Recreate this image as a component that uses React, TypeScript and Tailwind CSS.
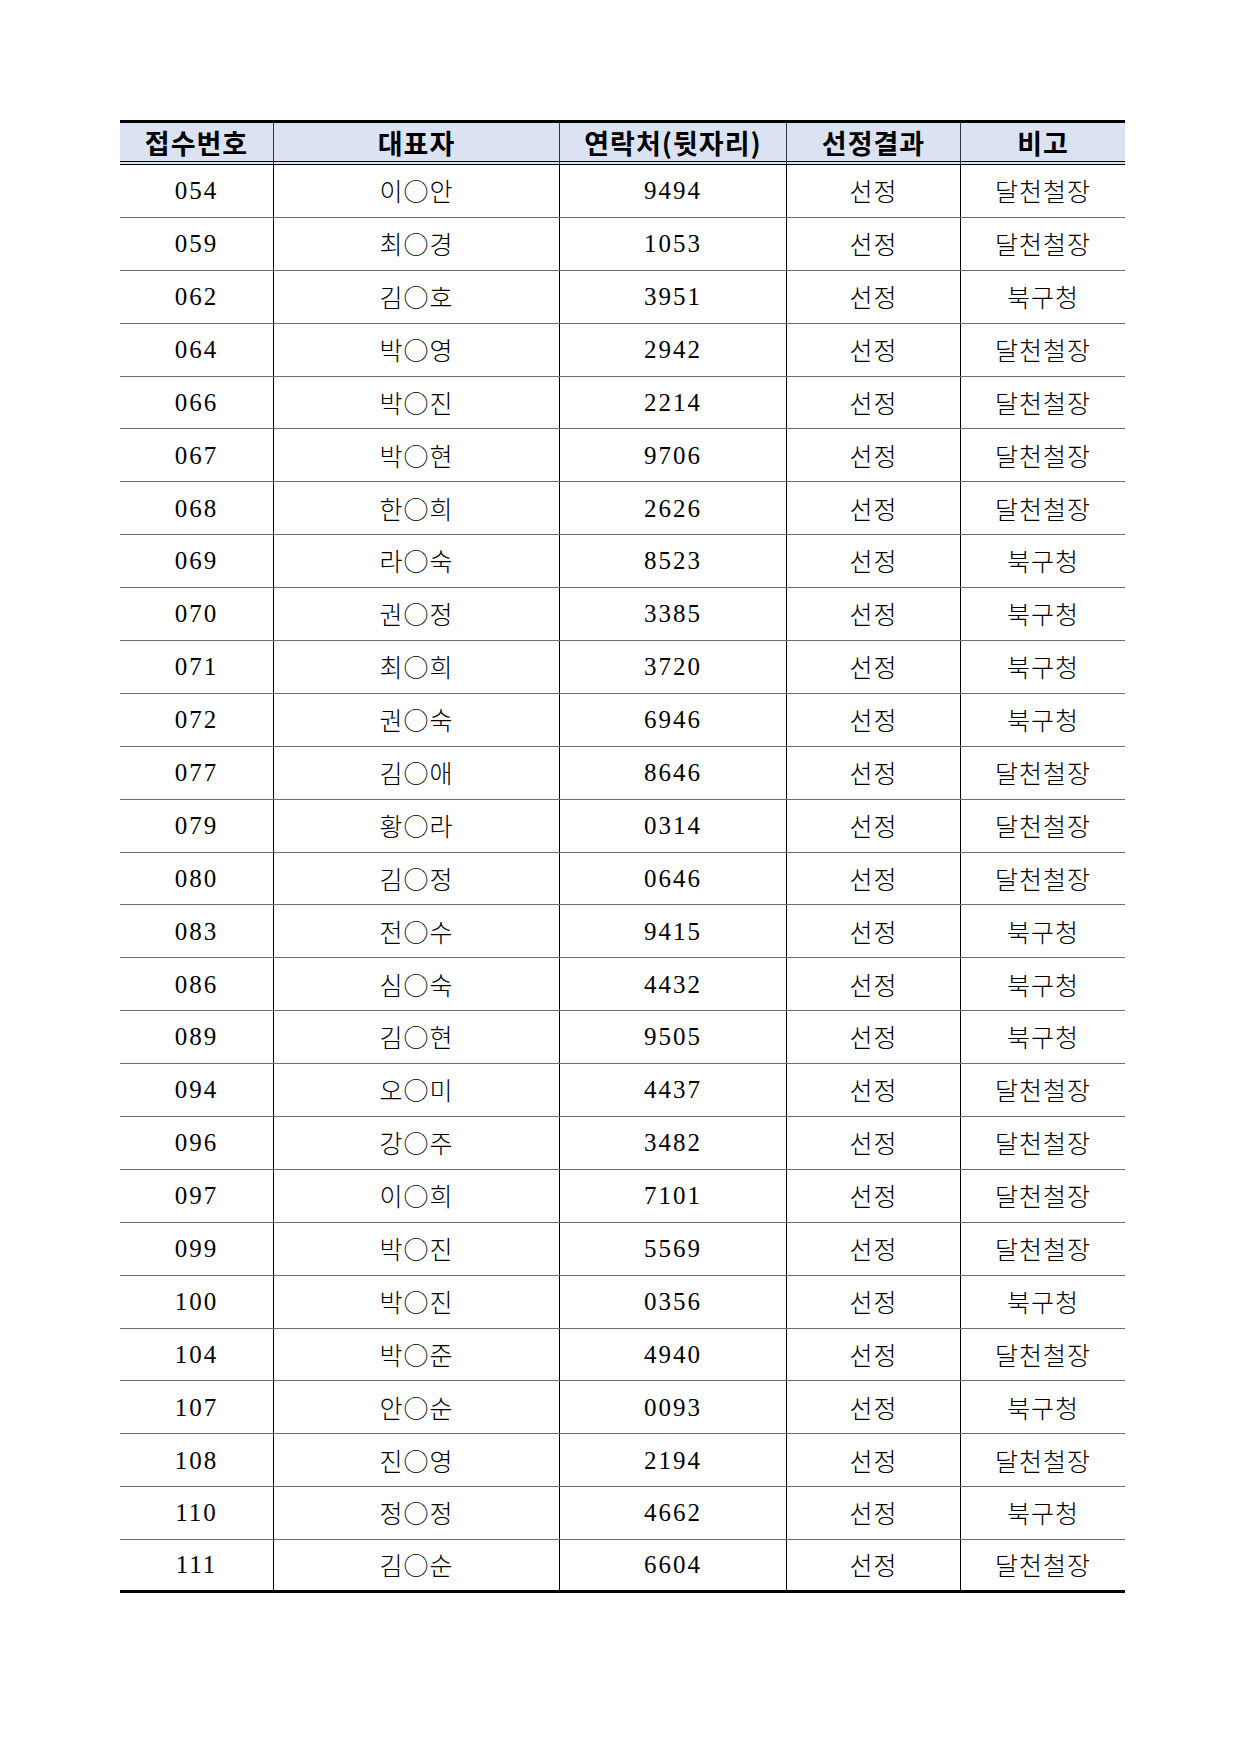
const rows: [string, string, string, string][] = [
  ["054", "이○안", "9494", "달천철장"],
  ["059", "최○경", "1053", "달천철장"],
  ["062", "김○호", "3951", "북구청"],
  ["064", "박○영", "2942", "달천철장"],
  ["066", "박○진", "2214", "달천철장"],
  ["067", "박○현", "9706", "달천철장"],
  ["068", "한○희", "2626", "달천철장"],
  ["069", "라○숙", "8523", "북구청"],
  ["070", "권○정", "3385", "북구청"],
  ["071", "최○희", "3720", "북구청"],
  ["072", "권○숙", "6946", "북구청"],
  ["077", "김○애", "8646", "달천철장"],
  ["079", "황○라", "0314", "달천철장"],
  ["080", "김○정", "0646", "달천철장"],
  ["083", "전○수", "9415", "북구청"],
  ["086", "심○숙", "4432", "북구청"],
  ["089", "김○현", "9505", "북구청"],
  ["094", "오○미", "4437", "달천철장"],
  ["096", "강○주", "3482", "달천철장"],
  ["097", "이○희", "7101", "달천철장"],
  ["099", "박○진", "5569", "달천철장"],
  ["100", "박○진", "0356", "북구청"],
  ["104", "박○준", "4940", "달천철장"],
  ["107", "안○순", "0093", "북구청"],
  ["108", "진○영", "2194", "달천철장"],
  ["110", "정○정", "4662", "북구청"],
  ["111", "김○순", "6604", "달천철장"],
]

const headers = ["접수번호", "대표자", "연락처(뒷자리)", "선정결과", "비고"]

const cols = "grid grid-cols-[154px_286px_227px_174px_164px]"
// digits in a serif, hangul in the CJK sans
const num = "font-['Liberation_Serif',serif] font-normal text-[25px] tracking-[2px] text-black"
const kor = "font-['Noto_Sans_CJK_KR',sans-serif] font-light text-[25px] tracking-[1px] text-black"
const cell = "flex items-center justify-center"

export default function App() {
  return (
    <div className="min-h-[1752px] w-[1240px] bg-white pt-[120px] pl-[120px]">
      <div className="w-[1005px]">
        <div
          className={`${cols} h-[45px] border-t-[3px] border-b-[4px] border-double border-black bg-[#dbe3f3]`}
          style={{ borderTopStyle: "solid" }}
        >
          {headers.map((h, i) => (
            <div
              key={h}
              className={`${cell} font-['Noto_Sans_CJK_KR',sans-serif] text-[27px] tracking-[1px] font-bold text-black ${
                i < 4 ? "border-r border-[#333]" : ""
              }`}
            >
              {h}
            </div>
          ))}
        </div>
        {rows.map((r, idx) => {
          const last = idx === rows.length - 1
          return (
            <div
              key={r[0]}
              className={`${cols} h-[52.9px] ${
                last ? "border-b-[3px] border-black" : "border-b border-[#6e6e6e]"
              }`}
            >
              <div className={`${cell} border-r border-black ${num}`}>{r[0]}</div>
              <div className={`${cell} border-r border-black ${kor}`}>{r[1]}</div>
              <div className={`${cell} border-r border-black ${num}`}>{r[2]}</div>
              <div className={`${cell} border-r border-black ${kor}`}>선정</div>
              <div className={`${cell} ${kor}`}>{r[3]}</div>
            </div>
          )
        })}
      </div>
    </div>
  )
}
